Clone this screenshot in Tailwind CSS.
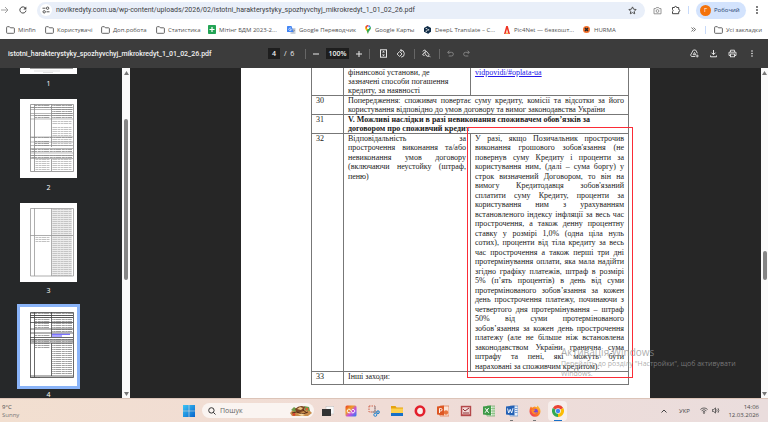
<!DOCTYPE html>
<html lang="uk">
<head>
    <meta charset="UTF-8">
    <meta name="viewport" content="width=device-width, initial-scale=1.0">
    <title>istotni_harakterystyky_spozhyvchyj_mikrokredyt_1_01_02_26.pdf</title>
    <!-- Tailwind CSS CDN -->
    <script src="https://cdn.jsdelivr.net/npm/@tailwindcss/browser@4"></script>
</head>
<body class="relative h-screen flex flex-col overflow-hidden bg-white font-['Open_Sans','Noto_Sans',sans-serif] text-[7px] leading-[10px] text-[#474747]">

    <!-- Shared drawings -->
    <svg class="absolute w-0 h-0">
        <defs>
            <pattern id="lines" width="12" height="2" patternUnits="userSpaceOnUse">
                <path d="M0 .5h5M5.600 .5h3.200M9.300 .5h2.400" stroke="#777" stroke-width=".7"/>
            </pattern>
            <pattern id="faint" width="11" height="2" patternUnits="userSpaceOnUse">
                <path d="M0 .5h4M4.500 .5h3M8 .5h2.600" stroke="#a8a8a8" stroke-width=".7"/>
            </pattern>
            <symbol id="folder" viewBox="0 0 9 8">
                <path d="M.6 1.500q0-.8.8-.8h2l1 1.100h3.200q.8 0 .8.8v3.900q0 .8-.8.8h-6.200q-.8 0-.8-.8z" fill="none" stroke="#555" stroke-width=".9"/>
            </symbol>
        </defs>
    </svg>

    <!-- Address bar -->
    <header class="h-5 shrink-0 flex items-center pr-2">
        <button aria-label="Вперед" class="w-[9px] flex justify-center">
            <svg class="w-2 h-2" viewBox="0 0 8 8" fill="none" stroke="#a0a0a0"><path d="M0 4h7M4 1l3 3-3 3"/></svg>
        </button>
        <button aria-label="Оновити" class="w-7 flex justify-center">
            <svg class="w-2 h-2" viewBox="0 0 8 8"><path d="M6.700 2.500A3.100 3.100 0 1 0 7 4.600" fill="none" stroke="#444"/><path d="M7.300 .4v3H4.300z" fill="#444"/></svg>
        </button>
        <div class="flex-1 h-[17px] flex items-center rounded-full bg-[#e9eff9] pl-[3px] pr-2">
            <button aria-label="Відомості про сайт" class="w-3 h-3 rounded-full bg-white flex items-center justify-center">
                <svg class="w-2 h-2" viewBox="0 0 8 8" fill="none" stroke="#444" stroke-width=".9"><path d="M.5 2.200h3M4.500 5.800h3"/><circle cx="5.600" cy="2.200" r="1.200"/><circle cx="2.200" cy="5.800" r="1.200"/></svg>
            </button>
            <input type="text" aria-label="Адреса" value="novikredyty.com.ua/wp-content/uploads/2026/02/istotni_harakterystyky_spozhyvchyj_mikrokredyt_1_01_02_26.pdf" class="flex-1 min-w-0 ml-1 bg-transparent font-[Roboto,sans-serif] text-[#3c4043] outline-none">
            <button aria-label="Додати закладку">
                <svg class="w-[9px] h-[9px]" viewBox="0 0 9 9" fill="none" stroke="#444" stroke-width=".9"><path d="M4.500 .9l1.100 2.300 2.500.3-1.800 1.800.4 2.500-2.200-1.200-2.200 1.200.4-2.500L.9 3.500l2.500-.3z"/></svg>
            </button>
        </div>
        <button aria-label="Знімок екрана" class="ml-2 w-[10px]">
            <svg class="w-[9px] h-[9px]" viewBox="0 0 9 9" fill="none" stroke="#8a8a8a" stroke-width=".9"><path d="M1 2.600h1.700l.6-1h2.400l.6 1H8V7.800H1z"/><circle cx="4.500" cy="5" r="1.400"/></svg>
        </button>
        <button aria-label="Розширення" class="ml-2 w-[10px]">
            <svg class="w-[10px] h-[10px]" viewBox="0 0 10 10" fill="none" stroke="#444"><path d="M1.500 2.500h2a1.100 1.100 0 0 1 2.200 0h2v2a1.100 1.100 0 0 1 0 2.200v2H1.500V6.600a1.100 1.100 0 0 0 0-2z"/></svg>
        </button>
        <span class="mx-[7px] w-px h-2 bg-[#c7dafa]"></span>
        <button class="h-[17px] w-[50px] flex items-center gap-[3px] rounded-full bg-[#d3e3fd] pl-1 text-[6px] font-medium text-[#24406e]">
            <span class="w-[11px] h-[11px] rounded-full bg-[#f4730c] flex items-center justify-center text-white">Г</span>Робочий
        </button>
        <button aria-label="Меню" class="ml-2 w-[6px] flex justify-center">
            <svg class="w-[2px] h-2" viewBox="0 0 2 8" fill="#444"><circle cx="1" cy="1" r=".9"/><circle cx="1" cy="4" r=".9"/><circle cx="1" cy="7" r=".9"/></svg>
        </button>
    </header>

    <!-- Bookmarks -->
    <nav class="h-[19px] shrink-0 grid grid-cols-[39px_56px_55px_52px_79px_78px_59px_80px_79px_1fr_auto] items-center pl-[6px] pr-[6px] whitespace-nowrap text-[6px] text-[#505050]">
        <a href="#" class="flex items-center gap-[3px]"><svg class="w-[9px] h-2"><use href="#folder"/></svg>Minfin</a>
        <a href="#" class="flex items-center gap-[3px]"><svg class="w-[9px] h-2"><use href="#folder"/></svg>Користувачі</a>
        <a href="#" class="flex items-center gap-[3px]"><svg class="w-[9px] h-2"><use href="#folder"/></svg>Доп.робота</a>
        <a href="#" class="flex items-center gap-[3px]"><svg class="w-[9px] h-2"><use href="#folder"/></svg>Статистика</a>
        <a href="#" class="flex items-center gap-[3px]"><svg class="w-2 h-[9px]" viewBox="0 0 8 9"><rect width="8" height="9" rx=".8" fill="#23a455"/><path d="M1.500 4.500h5M4 2v5" stroke="#fff" stroke-width="1.200"/></svg>Мітінг БДМ 2023-2...</a>
        <a href="#" class="flex items-center gap-[3px]"><svg class="w-[9px] h-2" viewBox="0 0 9 8"><rect x="3.500" y="2" width="5" height="6" rx=".6" fill="#cdd3dc"/><path d="M0 .6Q0 0 .6 0H4.500l2 6H.6Q0 6 0 5.400z" fill="#4285f4"/><path d="M4.200 2.600a1.300 1.300 0 1 0 .2 1H3.100" fill="none" stroke="#fff" stroke-width=".6"/><path d="M5.500 4.200h2.400M6.700 3.500v.7M7.500 4.200Q7 6 5.700 6.500" stroke="#6b7787" stroke-width=".5" fill="none"/></svg>Google Переводчик</a>
        <a href="#" class="flex items-center gap-1"><svg class="w-[6px] h-[9px]" viewBox="0 0 6 9"><path d="M3 9Q2.600 6.500 1 5A3 3 0 0 1 .7 1.200L3 3z" fill="#fbbc04"/><path d="M.6 1.200A3 3 0 0 1 3.800 .1L1 4z" fill="#ea4335"/><path d="M3.800 .1A3 3 0 0 1 5.700 1.800L3 3z" fill="#4285f4"/><path d="M5.700 1.800A3 3 0 0 1 5 5Q3.300 6.600 3 9L1.600 5.600z" fill="#34a853"/><circle cx="3" cy="3" r="1.100" fill="#fff"/></svg>Google Карты</a>
        <a href="#" class="flex items-center gap-1"><svg class="w-[7px] h-2" viewBox="0 0 7 8"><path d="M3.500 0L7 2v3.800L4.600 7.200V8l-1-.5L0 5.800V2z" fill="#0f2b46"/><path d="M2.200 2.500l2.400 1.300-2.400 1.400" stroke="#fff" stroke-width=".5" fill="none"/><circle cx="2.200" cy="2.500" r=".6" fill="#fff"/><circle cx="4.700" cy="3.800" r=".6" fill="#fff"/><circle cx="2.200" cy="5.200" r=".6" fill="#fff"/></svg>DeepL Translate – C...</a>
        <a href="#" class="flex items-center gap-1"><svg class="w-[6px] h-2" viewBox="0 0 6 8"><path d="M0 8L2.200 0h1.600L6 8H4.400L3 3 1.600 8z" fill="#ee3322"/><path d="M2 8l1-2.500L4 8z" fill="#f79a1c"/></svg>Pic4Net — безкошт...</a>
        <a href="#" class="flex items-center gap-1"><svg class="w-[7px] h-[7px]" viewBox="0 0 7 7"><circle cx="3.500" cy="3.500" r="3.500" fill="#f4702a"/><path d="M2 2l3 3M5 2L2 5" stroke="#262626" stroke-width="1.500"/></svg>HURMA</a>
        <div class="flex items-center">
            <button aria-label="Інші закладки" class="mr-[9px]"><svg class="w-[5px] h-[5px]" viewBox="0 0 5 5" fill="none" stroke="#444" stroke-width=".8"><path d="M.4 .5l2 2-2 2M2.600 .5l2 2-2 2"/></svg></button>
            <span class="w-px h-2 bg-[#c7dafa] mr-2"></span>
            <a href="#" class="flex items-center gap-[3px]"><svg class="w-[9px] h-2"><use href="#folder"/></svg>Усі закладки</a>
        </div>
    </nav>

    <!-- PDF toolbar -->
    <div class="h-[29px] shrink-0 grid grid-cols-[260px_1fr_auto] items-center bg-[#3c3c3c] px-2 text-[#f1f1f1]">
        <h1 class="font-[Roboto,sans-serif] font-medium whitespace-nowrap">istotni_harakterystyky_spozhyvchyj_mikrokredyt_1_01_02_26.pdf</h1>
        <div class="flex items-center">
            <input type="text" aria-label="Сторінка" value="4" class="w-3 h-[11px] bg-[#1e1e1e] text-center font-semibold outline-none">
            <span class="ml-1 w-[21px] whitespace-pre">/  6</span>
            <span class="w-px h-[10px] bg-[#666]"></span>
            <button aria-label="Зменшити" class="w-5 flex justify-center"><svg class="w-[6px] h-[6px]" viewBox="0 0 6 6" stroke="#e8e8e8"><path d="M0 3h6"/></svg></button>
            <input type="text" aria-label="Масштаб" value="100%" class="w-[23px] h-[11px] bg-[#1e1e1e] text-center font-semibold outline-none">
            <button aria-label="Збільшити" class="w-5 flex justify-center"><svg class="w-[6px] h-[6px]" viewBox="0 0 6 6" stroke="#e8e8e8"><path d="M0 3h6M3 0v6"/></svg></button>
            <span class="w-px h-[10px] bg-[#666]"></span>
            <button aria-label="За розміром сторінки" class="ml-[9px] w-[9px]"><svg class="w-[9px] h-[9px]" viewBox="0 0 9 9"><rect x="1.500" y=".8" width="6" height="7.400" fill="none" stroke="#e8e8e8"/><path d="M4.500 1.700L6 3.500H3zM4.500 7.300L6 5.500H3z" fill="#e8e8e8"/></svg></button>
            <button aria-label="Повернути" class="ml-2 w-[9px]"><svg class="w-[9px] h-[9px]" viewBox="0 0 9 9" fill="none" stroke="#e8e8e8" stroke-width=".9"><path d="M3.600 2.500L6 5 3.600 7.500 1.100 5z"/><path d="M4.500 1.200a3.500 3.500 0 1 1 .6 7"/><path d="M5.700 0L4.300 1.200l1.400 1.300"/></svg></button>
            <span class="ml-[9px] w-px h-[10px] bg-[#666]"></span>
            <button aria-label="Малювати" class="ml-[7px] w-[9px]"><svg class="w-[9px] h-[9px]" viewBox="0 0 9 9" fill="none" stroke="#e8e8e8" stroke-width=".9"><path d="M.8 2.500Q2.300 .2 3.300 1.200T1.700 4.200 2.500 6.500"/><path d="M4.300 2.200L7 5.500 6.500 7.500 4.700 7 2.700 4z"/><path d="M7.500 7.200l1 1"/></svg></button>
            <span class="ml-2 w-px h-[10px] bg-[#666]"></span>
            <button aria-label="Скасувати" disabled class="ml-[7px] w-2"><svg class="w-[7px] h-[7px]" viewBox="0 0 7 7" fill="none" stroke="#888" stroke-width=".9"><path d="M2.300 .6L.7 2.300l1.600 1.700M.8 2.300h3.700a1.800 1.800 0 0 1 0 3.700H1.700"/></svg></button>
            <button aria-label="Повторити" disabled class="ml-2 w-2"><svg class="w-[7px] h-[7px]" viewBox="0 0 7 7" fill="none" stroke="#888" stroke-width=".9"><path d="M4.700 .6l1.600 1.700-1.600 1.700M6.200 2.300H2.500a1.800 1.800 0 0 0 0 3.700h2.800"/></svg></button>
        </div>
        <div class="flex items-center gap-[10px] pr-1">
            <button aria-label="Зберегти на Диску"><svg class="w-[9px] h-[9px]" viewBox="0 0 9 9" fill="none" stroke="#e8e8e8" stroke-width=".9"><path d="M5.200 7.500H1.500L.6 6 3.400 1h2.200L7.400 4.300M3.200 5.700l1.300-2.300 1.300 2.300zM7.200 5.500v3M5.700 7h3"/></svg></button>
            <button aria-label="Завантажити"><svg class="w-[9px] h-[9px]" viewBox="0 0 9 9" fill="none" stroke="#e8e8e8"><path d="M4.500 1v4.500M2.500 3.700l2 2 2-2M1.500 6.500v1.300h6V6.500"/></svg></button>
            <button aria-label="Друкувати"><svg class="w-[9px] h-[9px]" viewBox="0 0 9 9" fill="none" stroke="#e8e8e8" stroke-width=".9"><path d="M2.500 3V1.200h4V3M2.500 6.500H1V3.200h7v3.300H6.500"/><rect x="2.500" y="5" width="4" height="2.800"/></svg></button>
            <button aria-label="Інші дії" class="w-[9px] flex justify-center"><svg class="w-[2px] h-[7px]" viewBox="0 0 2 7" fill="#e8e8e8"><circle cx="1" cy="1" r=".8"/><circle cx="1" cy="3.500" r=".8"/><circle cx="1" cy="6" r=".8"/></svg></button>
        </div>
    </div>

    <!-- Viewer -->
    <main class="flex-1 min-h-0 flex overflow-hidden bg-[#262626]">
        <!-- Page thumbnails -->
        <aside class="w-[122px] shrink-0 flex flex-col items-start pl-5 bg-[#262829] overflow-hidden text-white">
            <button class="w-[57px] shrink-0 flex flex-col items-center">
                <svg class="w-[57px] h-[6px] bg-white" viewBox="0 0 57 6"><path d="M10 .5h43" stroke="#999"/><path d="M14 3h26M23 4.500h10" stroke="#ccc" stroke-width=".6"/></svg>
                <span class="h-5 leading-5">1</span>
            </button>
            <button class="mt-[5px] w-[57px] shrink-0 flex flex-col items-center">
                <svg class="w-[57px] h-[79px] bg-white" viewBox="0 0 57 79">
                    <path d="M15 6h15v2H15zM32 6h20v5H32zM10 8h42v2H10zM15 15h15v5H15zM32 12h20v8H32zM10 38h42v2H10zM15 42h14v5H15zM10 50h42v3H10zM10 56h42v4H10z" fill="url(#lines)"/>
                    <path d="M32 21h20v5H32zM32 28h20v9H32zM32 39h20v8H32zM15 60h15v11H15zM32 60h20v12H32z" fill="url(#faint)"/>
                    <path d="M10.500 5.500h43v67h-43zM14.500 5v67M31.500 5v43M31.500 60v12" fill="none" stroke="#888" stroke-width=".8"/>
                    <path d="M10 8.500h43M10 10.500h43M10 14.500h43M10 16.500h43M10 20h43M10 38h43M10 43h43M10 46.500h43M10 49.500h43M10 54h43M10 56.500h43M10 59.500h43" stroke="#888" stroke-width=".6"/>
                </svg>
                <span class="h-5 leading-5">2</span>
            </button>
            <button class="mt-[5px] w-[57px] shrink-0 flex flex-col items-center">
                <svg class="w-[57px] h-[79px] bg-white" viewBox="0 0 57 79">
                    <path d="M32 6h20v67H32zM15 33h15v6H15z" fill="url(#faint)"/>
                    <path d="M32 6h20v67H32z" fill="#ccc" fill-opacity=".35"/>
                    <path d="M10.500 5.500h43v67.500h-43zM14.500 5v68M31.500 5v68M10 32.500h43" fill="none" stroke="#999" stroke-width=".8"/>
                </svg>
                <span class="h-[18px] leading-[18px]">3</span>
            </button>
            <button class="mt-[7px] w-[57px] shrink-0 flex flex-col items-center">
                <svg class="w-[57px] h-[79px] bg-white outline-3 outline-[#8ab4f8]" viewBox="0 0 57 79">
                    <path d="M10 6h43v5H10zM15 11h15v4H15zM32 11h20v14H32zM15 16h14v5H15zM15 27h15v3H15zM10 31h43v5H10z" fill="url(#lines)"/>
                    <path d="M15 36h15v5H15zM32 36h20v32H32zM10 69h10v2H10z" fill="url(#lines)"/>
                    <path d="M10.500 5.500h43v65h-43zM14.500 5v65M31.500 5v25M31.500 36v33M10 8.500h43M10 10.500h43M10 15.500h43M10 22h43M10 26h43M10 30.500h43M10 33h43M10 36h43M10 69h43" fill="none" stroke="#444" stroke-width=".8"/>
                    <path d="M32 27.300h18M32 29h10" stroke="#5a50ff"/>
                </svg>
                <span class="mt-1 leading-[10px]">4</span>
            </button>
        </aside>
        <div class="w-2 shrink-0 flex flex-col items-center bg-[#fafafa]">
            <svg class="mt-[3px] w-[5px] h-1" viewBox="0 0 5 4"><path d="M2.500 0L5 4H0z" fill="#777"/></svg>
            <span class="mt-11 w-1 h-[161px] rounded-full bg-[#858585]"></span>
            <svg class="mt-auto mb-[2px] w-[5px] h-1" viewBox="0 0 5 4"><path d="M0 0h5L2.500 4z" fill="#777"/></svg>
        </div>

        <!-- Document page -->
        <div class="flex-1 min-w-0 flex justify-center">
            <article class="relative w-[409px] bg-white pl-[70px] text-[#1a1a1a] font-['Liberation_Serif',serif] text-[8px] leading-[9px]">
                <table class="w-[318px] table-fixed border-collapse whitespace-nowrap [&_td]:border [&_td]:border-[#777] [&_td]:px-1 [&_td]:py-0 [&_td]:align-top [&_div]:grid [&_div]:auto-rows-fr [&_.j>span]:[text-align-last:justify]">
                    <colgroup><col class="w-8"><col class="w-[127px]"><col></colgroup>
                    <tbody>
                        <tr>
                            <td class="border-t-0!"></td>
                            <td class="border-t-0!"><div class="h-[27px]"><span>фінансової установи, де</span><span>зазначені способи погашення</span><span>кредиту, за наявності</span></div></td>
                            <td class="border-t-0!"><a href="#" class="text-[#2418e8] underline">vidpovidi/#oplata-ua</a></td>
                        </tr>
                        <tr>
                            <td>30</td>
                            <td colspan="2"><div class="j h-[18px]"><span>Попередження: споживач повертає суму кредиту, комісії та відсотки за його</span><span class="[text-align-last:left]!">користування відповідно до умов договору та вимог законодавства України</span></div></td>
                        </tr>
                        <tr>
                            <td>31</td>
                            <td colspan="2" class="font-bold"><div class="h-[18px]"><span>V. Можливі наслідки в разі невиконання споживачем обов’язків за</span><span>договором про споживчий кредит</span></div></td>
                        </tr>
                        <tr>
                            <td>32</td>
                            <td><div class="j h-[47px]"><span>Відповідальність за</span><span>прострочення виконання та/або</span><span>невиконання умов договору</span><span>(включаючи неустойку (штраф,</span><span class="[text-align-last:left]!">пеню)</span></div></td>
                            <td>
                                <div class="j h-[237px]">
                                    <span>У разі, якщо Позичальник прострочив</span>
                                    <span>виконання грошового зобов'язання (не</span>
                                    <span>повернув суму Кредиту і проценти за</span>
                                    <span>користування ним, (далі – сума боргу) у</span>
                                    <span>строк визначений Договором, то він на</span>
                                    <span>вимогу Кредитодавця зобов'язаний</span>
                                    <span>сплатити суму Кредиту, проценти за</span>
                                    <span>користування ним з урахуванням</span>
                                    <span>встановленого індексу інфляції за весь час</span>
                                    <span>прострочення, а також денну процентну</span>
                                    <span>ставку у розмірі 1,0% (одна ціла нуль</span>
                                    <span>сотих), проценти від тіла кредиту за весь</span>
                                    <span>час прострочення а також перші три дні</span>
                                    <span>протермінування оплати, яка мала надійти</span>
                                    <span>згідно графіку платежів, штраф в розмірі</span>
                                    <span>5% (п’ять процентів) в день від суми</span>
                                    <span>протермінованого зобов’язання за кожен</span>
                                    <span>день прострочення платежу, починаючи з</span>
                                    <span>четвертого дня протермінування – штраф</span>
                                    <span>50% від суми протермінованого</span>
                                    <span>зобов’язання за кожен день прострочення</span>
                                    <span>платежу (але не більше ніж встановлена</span>
                                    <span>законодавством України гранична сума</span>
                                    <span>штрафу та пені, які можуть бути</span>
                                    <span class="[text-align-last:left]!">нараховані за споживчим кредитом).</span>
                                </div>
                            </td>
                        </tr>
                        <tr>
                            <td>33</td>
                            <td colspan="2"><div class="h-3">Інші заходи:</div></td>
                        </tr>
                    </tbody>
                </table>
                <!-- Highlight frame -->
                <div class="absolute left-[226px] top-[59px] w-[166px] h-[251px] border border-red-500"></div>
            </article>
        </div>
        <div class="w-[7px] shrink-0 flex flex-col items-center bg-[#fafafa]">
            <svg class="mt-[3px] w-[5px] h-1" viewBox="0 0 5 4"><path d="M2.500 0L5 4H0z" fill="#777"/></svg>
            <span class="mt-44 w-1 h-[29px] rounded-full bg-[#858585]"></span>
            <svg class="mt-auto mb-[2px] w-[5px] h-1" viewBox="0 0 5 4"><path d="M0 0h5L2.500 4z" fill="#777"/></svg>
        </div>
    </main>

    <!-- Taskbar -->
    <footer class="h-6 shrink-0 flex items-center border-t border-[#dcc4b8] bg-linear-to-r from-[#f2dfd0] via-[#f0dcd6] to-[#eadddd] pl-[2px] pr-[9px] text-[#4a4a4a]">
        <div class="w-[181px] text-[6px] leading-2"><p>9°C</p><p class="text-[#777]">Sunny</p></div>
        <button aria-label="Пуск"><svg class="w-3 h-3" viewBox="0 0 12 12"><defs><linearGradient id="win" x2="1" y2="1"><stop stop-color="#3cc4f5"/><stop offset="1" stop-color="#0664cc"/></linearGradient></defs><path d="M0 0h5.700v5.700H0zM6.300 0H12v5.700H6.300zM0 6.300h5.700V12H0zM6.300 6.300H12V12H6.300z" fill="url(#win)"/></svg></button>
        <label class="ml-[7px] w-28 h-[15px] flex items-center rounded-full bg-[#faf4f1] pl-[6px] pr-[2px]">
            <svg class="w-2 h-2" viewBox="0 0 8 8" fill="none" stroke="#333"><circle cx="3.400" cy="3.400" r="2.700"/><path d="M5.300 5.300l2.200 2.200"/></svg>
            <input type="text" aria-label="Пошук" placeholder="Пошук" class="ml-1 flex-1 min-w-0 bg-transparent text-[7px] outline-none placeholder:text-[#666]">
            <svg class="w-[23px] h-[13px]" viewBox="0 0 23 13"><path d="M1 9l3-3 7-1 9 1 3 3-4 3H3z" fill="#c88d4b"/><path d="M2 6l3-3 3 2-2 3zM15 2l5 1 1 4-5-1z" fill="#6f9a4a"/><path d="M6 5q5-5 10-2l-1 4-7 2z" fill="#7a4421"/><path d="M8 5l3-2 3 1-2 2z" fill="#f0c987"/><path d="M3 9q5-2 8 0t8-1M14 6l4 3" stroke="#552d18" fill="none"/><circle cx="5" cy="10.500" r="1.400" fill="#d9442c"/><circle cx="18" cy="5" r="1.200" fill="#e35b31"/><path d="M9 10.500l4-1 3 1.500-3 1z" fill="#f3d79e"/></svg>
        </label>
        <div class="ml-1 flex items-center gap-1">
            <button aria-label="Подання завдань" class="w-[19px] h-5 flex items-center justify-center"><svg class="w-3 h-3" viewBox="0 0 12 12"><rect x="4" y="1.500" width="8" height="7.500" fill="#f8f8f8" stroke="#bbb" stroke-width=".5"/><rect y="4" width="9" height="7" fill="#333"/></svg></button>
            <button aria-label="Creative Cloud" class="w-[19px] h-5 flex items-center justify-center"><svg class="w-3 h-3" viewBox="0 0 12 12"><defs><linearGradient id="cc" x2="1" y2="1"><stop stop-color="#e8372c"/><stop offset=".35" stop-color="#f0a020"/><stop offset=".6" stop-color="#c54be0"/><stop offset="1" stop-color="#2080f0"/></linearGradient></defs><rect x=".5" y=".5" width="11" height="11" rx="1.500" fill="url(#cc)"/><path d="M5.500 7.800H4a1.800 1.800 0 1 1 1.600-2.600l1 1.600M6.600 5.200a1.700 1.700 0 1 1 1.400 2.600H6.500" fill="none" stroke="#fff"/></svg></button>
            <button aria-label="Ножиці" class="w-[19px] h-5 flex items-center justify-center"><svg class="w-3 h-3" viewBox="0 0 12 12" fill="none"><path d="M1 1h6v6H1z" stroke="#d0604a" stroke-dasharray="1.500 1"/><path d="M7 1v7M4 7h7" stroke="#8a9099"/><circle cx="7.300" cy="9.800" r="1.500" stroke="#1b82d1"/><circle cx="10" cy="7.200" r="1.400" stroke="#1b82d1"/></svg></button>
            <button aria-label="Провідник" class="w-[19px] h-5 flex items-center justify-center"><svg class="w-3 h-3" viewBox="0 0 12 12"><path d="M0 1h4.500l1 1.500H12V9H0z" fill="#e5a30f"/><path d="M0 3.500h12V10H0z" fill="#fdd14f"/><path d="M0 8h12v3H0z" fill="#1870c7"/></svg></button>
            <button aria-label="Opera" class="w-[19px] h-5 flex items-center justify-center"><svg class="w-3 h-3" viewBox="0 0 12 12"><ellipse cx="6" cy="6" rx="4.200" ry="4.500" fill="#fff" fill-opacity=".5" stroke="#e3202c" stroke-width="2.600"/></svg></button>
            <button aria-label="PowerPoint" class="w-[19px] h-5 flex items-center justify-center"><svg class="w-3 h-3" viewBox="0 0 12 12"><path d="M3 1h9v10H3z" fill="#fbe3d6" stroke="#d9622f" stroke-width=".6"/><circle cx="9" cy="7.500" r="2.200" fill="#e8743d"/><path d="M0 1.500L7 .5v10L0 9.500z" fill="#dd5724"/><path d="M2.500 8V3.500h1.300a1.200 1.200 0 0 1 0 2.500H2.600" fill="none" stroke="#fff" stroke-width=".9"/></svg></button>
            <button aria-label="Picture Manager" class="w-[19px] h-5 flex items-center justify-center"><svg class="w-3 h-3" viewBox="0 0 12 12"><rect x=".8" y=".8" width="10.400" height="10.400" fill="#b4484a"/><rect x="2.300" y="2.300" width="7.400" height="7" fill="#f2d9d7"/><path d="M3 4l2 2 4-3M3 8h6" stroke="#8d2e33" fill="none"/></svg></button>
            <button aria-label="Excel" class="w-[19px] h-5 flex items-center justify-center"><svg class="w-3 h-3" viewBox="0 0 12 12"><path d="M4 1h8v10H4z" fill="#e9f4e6" stroke="#5a9b54" stroke-width=".6"/><path d="M8 3.500h4M8 6h4M8 8.500h4M10 1v10" stroke="#6cb063" stroke-width=".6"/><path d="M0 1.500L8 .5v10L0 9.500z" fill="#3f9a48"/><path d="M2.200 3.300l3.500 4.500M5.700 3L2 7.800" stroke="#fff"/></svg></button>
            <button aria-label="Word" class="relative w-[19px] h-5 flex items-center justify-center"><svg class="w-3 h-3" viewBox="0 0 12 12"><path d="M4 1h8v10H4z" fill="#eaf1fb" stroke="#4a7cc0" stroke-width=".6"/><path d="M9 3.500h2.500M9 5.500h2.500M9 7.500h2.500" stroke="#4a7cc0" stroke-width=".7"/><path d="M0 1.500L8.500 .5v10L0 9.500z" fill="#2461b5"/><path d="M1.500 3.500L2.700 8l1.500-3.700L5.700 8 7 3.200" fill="none" stroke="#fff" stroke-width=".9"/></svg><span class="absolute bottom-0 left-2 w-[3px] h-px bg-[#777]"></span></button>
            <button aria-label="Firefox" class="relative w-[19px] h-5 flex items-center justify-center"><svg class="w-3 h-3" viewBox="0 0 12 12"><defs><linearGradient id="ff" x1="1" x2="0" y2="1"><stop stop-color="#ffd53a"/><stop offset=".5" stop-color="#ff7a1f"/><stop offset="1" stop-color="#e8286a"/></linearGradient></defs><path d="M1 3l1-1.500 1 1.200L5.500 1.500 8 2.200 8.200 .5Q11.500 3 11.500 6.500a5.500 5.200 0 0 1-11 0Q.5 4.500 1 3z" fill="url(#ff)"/><circle cx="6.200" cy="6.300" r="2.600" fill="#7a43d6"/><path d="M2.500 5q3-1.500 4 0l-2 1.500q1.500 1.500 4 .5-1 2.500-3.500 2T2.500 5z" fill="#ff8b2b"/></svg><span class="absolute bottom-0 left-2 w-[3px] h-px bg-[#777]"></span></button>
            <button aria-label="Chrome" class="relative w-[19px] h-5 flex items-center justify-center rounded-sm bg-white/50"><svg class="w-3 h-3" viewBox="0 0 12 12"><path d="M6 6L.8 3A6 6 0 0 1 11.200 3z" fill="#ea4335"/><path d="M6 6l5.200-3A6 6 0 0 1 6 12z" fill="#fbbc04"/><path d="M6 6v6A6 6 0 0 1 .8 3z" fill="#34a853"/><circle cx="6" cy="6" r="2.800" fill="#fff"/><circle cx="6" cy="6" r="2.200" fill="#4285f4"/></svg><span class="absolute bottom-0 left-[6px] w-2 h-px bg-[#1870c7]"></span></button>
        </div>
        <div class="ml-auto flex items-center">
            <button aria-label="Приховані піктограми"><svg class="w-[6px] h-1" viewBox="0 0 6 4" fill="none" stroke="#444"><path d="M.5 3.500L3 1l2.500 2.500"/></svg></button>
            <button class="ml-3 w-[21px] text-left text-[6px]">УКР</button>
            <svg class="w-2 h-[7px]" viewBox="0 0 8 7" fill="none" stroke="#444" stroke-width=".8"><path d="M.4 2.500a5 5 0 0 1 7.200 0M1.600 3.800a3.400 3.400 0 0 1 4.800 0M2.800 5a1.700 1.700 0 0 1 2.400 0"/><circle cx="4" cy="6" r=".5"/></svg>
            <svg class="ml-1 w-2 h-[7px]" viewBox="0 0 8 7" fill="none" stroke="#444" stroke-width=".8"><path d="M.4 2.500h1.300L3.500 .9v5.200L1.700 4.500H.4zM4.700 2.300q.8 1.200 0 2.400M6 1.200q1.700 2.300 0 4.600"/></svg>
            <div class="w-[39px] text-right text-[6px] leading-2"><p>14:06</p><p>12.03.2026</p></div>
        </div>
    </footer>

    <!-- Activation notice over the desktop -->
    <div class="absolute left-[561px] top-[345px] whitespace-nowrap text-[#929292]/75 pointer-events-none">
        <p class="text-[10px] leading-[14px]">Активація Windows</p>
        <p>Перейдіть до розділу "Настройки", щоб активувати</p>
        <p>Windows.</p>
    </div>
</body>
</html>
